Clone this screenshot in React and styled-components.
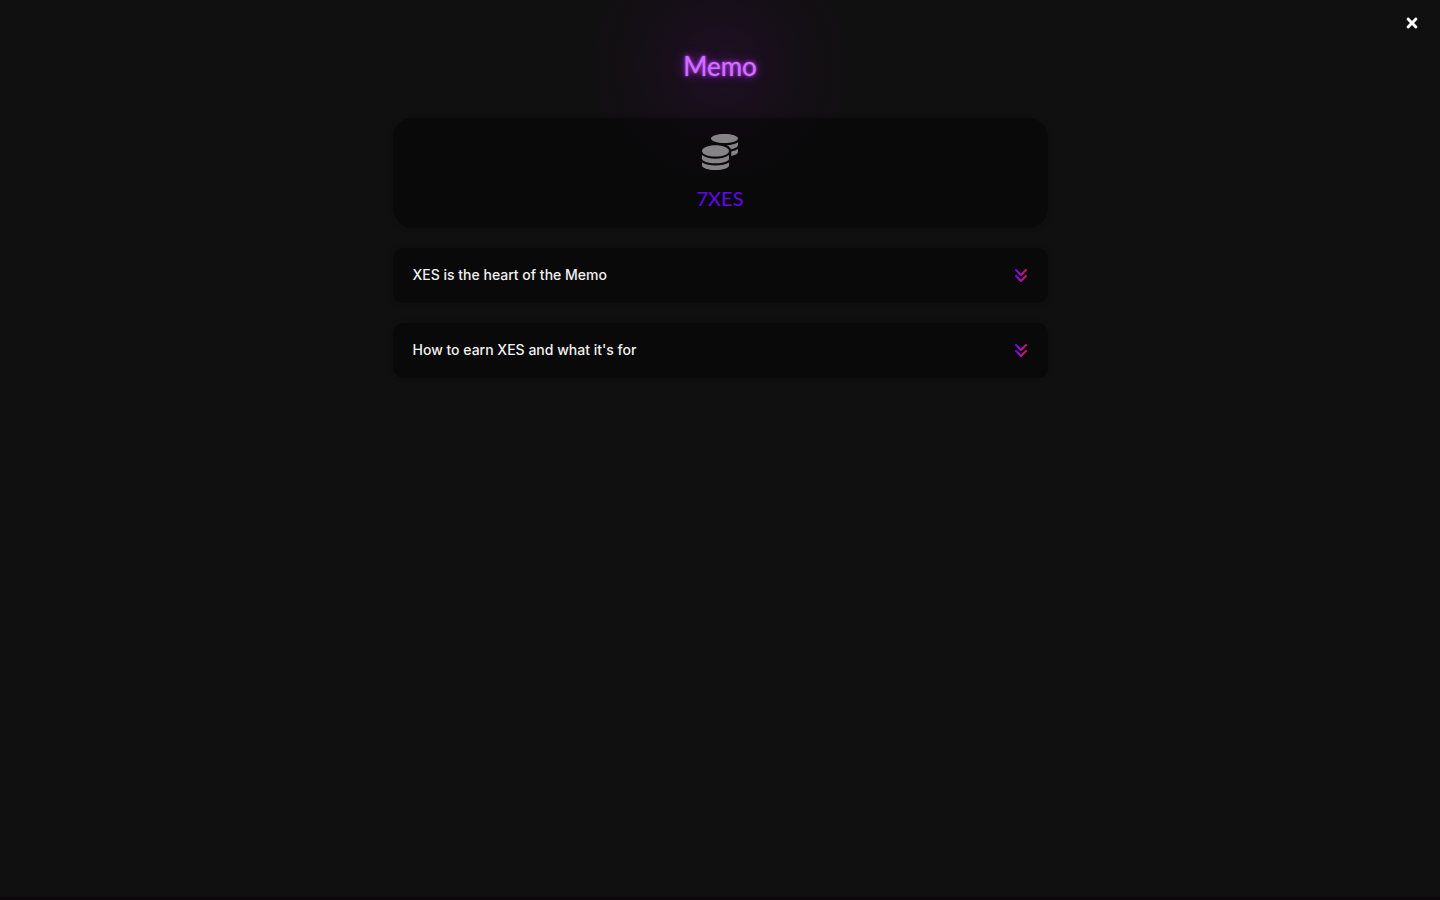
import React, { useState } from "react";
import styled, { createGlobalStyle } from "styled-components";
import { FaCoins, FaTimes } from "react-icons/fa";
import { FaAnglesDown } from "react-icons/fa6";

const questions = [
  {
    id: "heart",
    title: "XES is the heart of the Memo",
  },
  {
    id: "earn",
    title: "How to earn XES and what it's for",
  },
];

const Question = (props) => {
  return (
    <QuestionButton
      type="button"
      aria-expanded={props.isOpen}
      onClick={() => props.handleToggle(props.question.id)}
    >
      {props.question.title}
      <Arrow $isOpen={props.isOpen} aria-hidden="true" />
    </QuestionButton>
  );
};

const App = () => {
  const [openId, setOpenId] = useState("");

  const handleToggle = (id) => {
    setOpenId((prev) => (prev === id ? "" : id));
  };

  return (
    <Page>
      <GlobalStyle />
      <GradientDefs aria-hidden="true">
        <linearGradient id="arrowGradient" x1="0" y1="0" x2="1" y2="0">
          <stop offset="0" stopColor="#6a00ff" />
          <stop offset="0.5" stopColor="#b010b0" />
          <stop offset="1" stopColor="#d0184c" />
        </linearGradient>
      </GradientDefs>
      <TopBar>
        <CloseButton type="button" aria-label="Close">
          <FaTimes />
        </CloseButton>
      </TopBar>
      <Content>
        <Logo>Memo</Logo>
        <Balance>
          <FaCoins size={36} color="#858386" />
          <Amount>7XES</Amount>
        </Balance>
        {questions.map((question) => (
          <Question
            question={question}
            isOpen={openId === question.id}
            handleToggle={handleToggle}
            key={question.id}
          />
        ))}
      </Content>
    </Page>
  );
};

const GlobalStyle = createGlobalStyle`
  * {
    box-sizing: border-box;
  }
  body {
    margin: 0;
    background: #101010;
    color: #f1f1f1;
    font-family: Inter, "Open Sans", sans-serif;
  }
`;
const Page = styled.div`
  min-height: 100vh;
  border-bottom: 3px solid #0d070b;
  background: radial-gradient(
    circle 140px at 50% 66px,
    #201024 0,
    #180f1b 50px,
    #130f14 95px,
    #101010 140px
  );
  overflow: hidden;
`;
const GradientDefs = styled.svg`
  display: block;
  width: 0;
  height: 0;
`;
const TopBar = styled.header`
  display: flex;
  justify-content: flex-end;
  padding: 15px 20px 0;
`;
const CloseButton = styled.button`
  display: flex;
  border: 0;
  padding: 0;
  background: transparent;
  color: #fff;
  font-size: 16px;
  cursor: pointer;
`;
const Content = styled.main`
  display: flex;
  flex-direction: column;
  gap: 20px;
  width: 100%;
  max-width: 695px;
  margin: 0 auto;
  padding: 15px 20px;
`;
const Logo = styled.h1`
  margin: 0 0 12px;
  color: #d070ff;
  font-family: Lato, sans-serif;
  font-size: 26px;
  font-weight: 400;
  line-height: 40px;
  text-align: center;
  text-shadow: 0 0 2px #c050f8, 0 0 5px #9a2cd0, 0 0 12px #7a1ca8;
`;
const Balance = styled.section`
  display: flex;
  flex-direction: column;
  align-items: center;
  gap: 12px;
  border-radius: 20px;
  padding: 16px 20px 14px;
  background: rgba(0, 0, 0, 0.4);
  box-shadow: 0 0 5px rgba(0, 0, 0, 0.2);
`;
const Amount = styled.p`
  margin: 0;
  color: #6405f0;
  font-family: Lato, sans-serif;
  font-size: 20px;
  line-height: 32px;
`;
const QuestionButton = styled.button`
  display: flex;
  justify-content: space-between;
  align-items: center;
  border: 0;
  border-radius: 10px;
  padding: 15px 20px 17px;
  background: rgba(0, 0, 0, 0.4);
  box-shadow: 0 0 5px rgba(0, 0, 0, 0.2);
  color: inherit;
  font-family: inherit;
  font-size: 14px;
  font-weight: 500;
  line-height: 23px;
  text-align: left;
  cursor: pointer;
`;
const Arrow = styled(FaAnglesDown)`
  width: 14px;
  height: 16px;
  transform: rotate(${(props) => (props.$isOpen ? "180deg" : "0deg")});
  path {
    fill: url(#arrowGradient);
  }
`;

export default App;
